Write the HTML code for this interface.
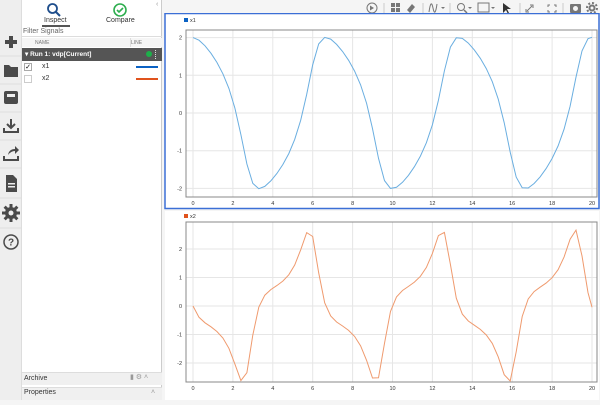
<!DOCTYPE html>
<html><head><meta charset="utf-8"><style>
*{box-sizing:border-box;margin:0;padding:0}
body{width:600px;height:400px;overflow:hidden;background:#f5f5f5;font-family:"Liberation Sans",sans-serif;position:relative}
.abs{position:absolute}
.lt{left:0;top:0;width:22px;height:400px;background:#eeeeee;border-right:1px solid #ddd}
.panel{left:22px;top:0;width:140px;height:400px;background:#fff;border-right:1px solid #ccc}
.t{font-size:7px;color:#333}
</style></head><body>
<div class="abs lt">
<svg width="22" height="400" fill="#4a4a4a">
<rect x="5" y="40" width="12" height="4"/><rect x="9" y="36" width="4" height="12"/>
<line x1="0" y1="56" x2="22" y2="56" stroke="#ddd"/>
<path d="M4 65h5l2 2h7v10H4z"/>
<line x1="0" y1="84" x2="22" y2="84" stroke="#ddd"/>
<rect x="4" y="91" width="14" height="13" rx="2"/><rect x="7" y="94" width="8" height="3" fill="#eee"/>
<line x1="0" y1="112" x2="22" y2="112" stroke="#ddd"/>
<path d="M11 119v9M7 124l4 4 4-4" stroke="#4a4a4a" stroke-width="2" fill="none"/><path d="M4 128v4h14v-4" stroke="#4a4a4a" stroke-width="2" fill="none"/>
<line x1="0" y1="140" x2="22" y2="140" stroke="#ddd"/>
<path d="M4 156v4h14v-4" stroke="#4a4a4a" stroke-width="2" fill="none"/><path d="M8 155q1-6 7-6v-3l4 4-4 4v-3q-4 0-7 4z"/>
<line x1="0" y1="168" x2="22" y2="168" stroke="#ddd"/>
<path d="M6 175h7l4 4v13H6z"/><rect x="8" y="183" width="7" height="1.5" fill="#eee"/><rect x="8" y="186" width="7" height="1.5" fill="#eee"/>
<line x1="0" y1="198" x2="22" y2="198" stroke="#ddd"/>
<circle cx="11" cy="213" r="6"/><rect x="9.5" y="204" width="3" height="18"/><rect x="2" y="211.5" width="18" height="3"/><rect x="9.5" y="204" width="3" height="18" transform="rotate(45 11 213)"/><rect x="9.5" y="204" width="3" height="18" transform="rotate(-45 11 213)"/><circle cx="11" cy="213" r="2.5" fill="#eee"/>
<line x1="0" y1="228" x2="22" y2="228" stroke="#ddd"/>
<circle cx="11" cy="242" r="7" fill="none" stroke="#4a4a4a" stroke-width="1.5"/><text x="11" y="245.5" font-size="10" text-anchor="middle" font-family="Liberation Sans" font-weight="bold">?</text>
</svg></div>
<div class="abs panel">
<svg class="abs" style="left:24px;top:2px" width="16" height="16"><circle cx="6.5" cy="6.5" r="4.5" fill="none" stroke="#1f4e8c" stroke-width="1.8"/><path d="M10 10l4 4" stroke="#1f4e8c" stroke-width="2"/></svg>
<div class="abs t" style="left:22px;top:17px;font-size:7px">Inspect</div>
<div class="abs" style="left:20px;top:25px;width:28px;height:1.5px;background:#555"></div>
<svg class="abs" style="left:90px;top:2px" width="16" height="16"><circle cx="8" cy="8" r="6" fill="none" stroke="#2eae4f" stroke-width="1.6"/><path d="M5 8l2 2 4-4" stroke="#2eae4f" stroke-width="1.6" fill="none"/></svg>
<div class="abs t" style="left:84px;top:17px">Compare</div>
<div class="abs t" style="left:134px;top:1px;color:#999">‹</div>
<div class="abs" style="left:0;top:28px;width:140px;height:9px;border-bottom:1px solid #ddd"></div>
<div class="abs t" style="left:1px;top:28px;color:#666">Filter Signals</div>
<div class="abs" style="left:0;top:38px;width:140px;height:9px;background:#f5f5f5"></div>
<div class="abs" style="left:13px;top:40px;font-size:5px;color:#777">NAME</div>
<div class="abs" style="left:109px;top:40px;font-size:5px;color:#777">LINE</div>
<div class="abs" style="left:108px;top:38px;width:1px;height:9px;background:#ddd"></div>
<div class="abs" style="left:0;top:48px;width:140px;height:13px;background:#555"></div>
<div class="abs" style="left:3px;top:50px;font-size:6.5px;color:#fff;font-weight:bold">▾ Run 1: vdp[Current]</div>
<div class="abs" style="left:124px;top:51px;width:6px;height:6px;border-radius:3px;background:#1cb04a"></div>
<div class="abs" style="left:133px;top:50px;width:1.5px;height:9px;border-left:1.5px dotted #ddd"></div>
<div class="abs" style="left:2px;top:63px;width:8px;height:8px;border:1px solid #aaa;font-size:7px;line-height:7px;text-align:center">✓</div>
<div class="abs t" style="left:20px;top:63px">x1</div>
<div class="abs" style="left:114px;top:66px;width:22px;height:2px;background:#0b62c4"></div>
<div class="abs" style="left:2px;top:75px;width:8px;height:8px;border:1px solid #ccc"></div>
<div class="abs t" style="left:20px;top:75px">x2</div>
<div class="abs" style="left:114px;top:78px;width:22px;height:2px;background:#e0531d"></div>
<div class="abs" style="left:0;top:372px;width:140px;height:13px;background:#f0f0f0;border-top:1px solid #ddd"></div>
<div class="abs t" style="left:2px;top:375px;font-size:7px">Archive</div>
<div class="abs" style="left:108px;top:373px;font-size:7px;color:#999">▮ ⚙ ˄</div>
<div class="abs" style="left:0;top:387px;width:140px;height:13px;background:#f0f0f0;border-top:1px solid #ddd"></div>
<div class="abs t" style="left:2px;top:389px;font-size:7px">Properties</div>
<div class="abs" style="left:129px;top:389px;font-size:7px;color:#999">˄</div>
</div>
<div class="abs" style="left:163px;top:0;width:437px;height:14px;background:#f5f5f5"></div>
<svg class="abs" style="left:360px;top:0" width="240" height="16" fill="#777" stroke="#777">
<circle cx="12" cy="8" r="5" fill="none" stroke-width="1"/><path d="M10 5.5v5l4-2.5z" stroke="none"/>
<line x1="24" y1="3" x2="24" y2="13" stroke="#ccc"/>
<rect x="31" y="3" width="4" height="4" stroke="none"/><rect x="36" y="3" width="4" height="4" stroke="none"/><rect x="31" y="8" width="4" height="4" stroke="none"/><rect x="36" y="8" width="4" height="4" stroke="none"/>
<path d="M47 10l5-6 3 3-5 6z" stroke="none"/>
<line x1="63" y1="3" x2="63" y2="13" stroke="#ccc"/>
<path d="M69 12q2-14 4-4t4-4" fill="none"/><path d="M81 7l2 2 2-2z" stroke="none"/>
<line x1="90" y1="3" x2="90" y2="13" stroke="#ccc"/>
<circle cx="101" cy="7" r="3.5" fill="none"/><path d="M104 10l3 3" stroke-width="1.5"/><path d="M108 7l2 2 2-2z" stroke="none"/>
<rect x="118" y="3" width="11" height="9" fill="none"/><path d="M131 7l2 2 2-2z" stroke="none"/>
<path d="M143 3v10l3-3 2 4 1-1-2-4h4z" fill="#333" stroke="none"/><line x1="139" y1="14.5" x2="153" y2="14.5" stroke="#555" stroke-width="1.5"/>
<line x1="160" y1="3" x2="160" y2="13" stroke="#ccc"/>
<path d="M167 11l5-5M170 5h3v3M166 9v3h3" fill="none"/>
<path d="M190 5h-2v2M194 5h2v2M190 12h-2v-2M194 12h2v-2" fill="none"/>
<line x1="203" y1="3" x2="203" y2="13" stroke="#ccc"/>
<rect x="210" y="4" width="11" height="9" rx="1" stroke="none"/><circle cx="215.5" cy="8.5" r="2.5" fill="#f5f5f5" stroke="none"/>
<circle cx="232" cy="8" r="3.5" stroke="none"/><circle cx="232" cy="8" r="5" fill="none" stroke-width="2" stroke-dasharray="2 1.9"/><circle cx="232" cy="8" r="1.5" fill="#f5f5f5" stroke="none"/>
</svg>
<svg class="abs" style="left:163px;top:13px" width="437" height="387" id="plots" font-family="Liberation Sans" font-size="5.5" fill="#333"></svg>
<script>
(function(){
var s=document.getElementById('plots'),h='';
var ox=163,oy=13;
function X(t){return 193+t*19.95-ox;}
h+='<rect x="2" y="0.5" width="434" height="195" fill="#fff" stroke="#3b6fd6" stroke-width="1.5"/>';
h+='<rect x="2" y="198" width="434" height="189" fill="#fff"/>';
h+='<rect x="21" y="5" width="4" height="4" fill="#0b62c4"/><text x="27" y="9">x1</text>';
function axes(top,bot,yticks,yf){
 var a='';
 for(var t=0;t<=20;t+=2){a+='<line x1="'+X(t)+'" y1="'+top+'" x2="'+X(t)+'" y2="'+bot+'" stroke="#e6e6e6"/>';a+='<text x="'+X(t)+'" y="'+(bot+8)+'" text-anchor="middle">'+t+'</text>';}
 yticks.forEach(function(v){var y=yf(v);a+='<line x1="23" y1="'+y+'" x2="434" y2="'+y+'" stroke="#e6e6e6"/><text x="19" y="'+(y+2)+'" text-anchor="end">'+v+'</text>';});
 a+='<rect x="23" y="'+top+'" width="411" height="'+(bot-top)+'" fill="none" stroke="#888"/>';
 return a;}
var f1=function(v){return 113-37.7*v-oy;},f2=function(v){return 306-28.5*v-oy;};
h+=axes(30-oy,197-oy,[2,1,0,-1,-2],f1);
h+='<rect x="21" y="201" width="4" height="4" fill="#e0531d"/><text x="27" y="205">x2</text>';
h+=axes(222-oy,382-oy,[2,1,0,-1,-2],f2);
var x=2,v=0,dt=0.01,p1=[],p2=[];
function d(x,v){return [v,(1-x*x)*v-x];}
for(var i=0;i<=2000;i++){var t=i*dt;
 if(i%30==0||i==2000){p1.push(X(t).toFixed(1)+','+f1(x).toFixed(1));p2.push(X(t).toFixed(1)+','+f2(v).toFixed(1));}
 var k1=d(x,v),k2=d(x+k1[0]*dt/2,v+k1[1]*dt/2),k3=d(x+k2[0]*dt/2,v+k2[1]*dt/2),k4=d(x+k3[0]*dt,v+k3[1]*dt);
 x+=dt/6*(k1[0]+2*k2[0]+2*k3[0]+k4[0]);v+=dt/6*(k1[1]+2*k2[1]+2*k3[1]+k4[1]);}
h+='<polyline points="'+p1.join(' ')+'" fill="none" stroke="#6aaee0" stroke-width="1"/>';
h+='<polyline points="'+p2.join(' ')+'" fill="none" stroke="#ef9a6e" stroke-width="1"/>';
s.innerHTML=h;})();
</script>
</body></html>
